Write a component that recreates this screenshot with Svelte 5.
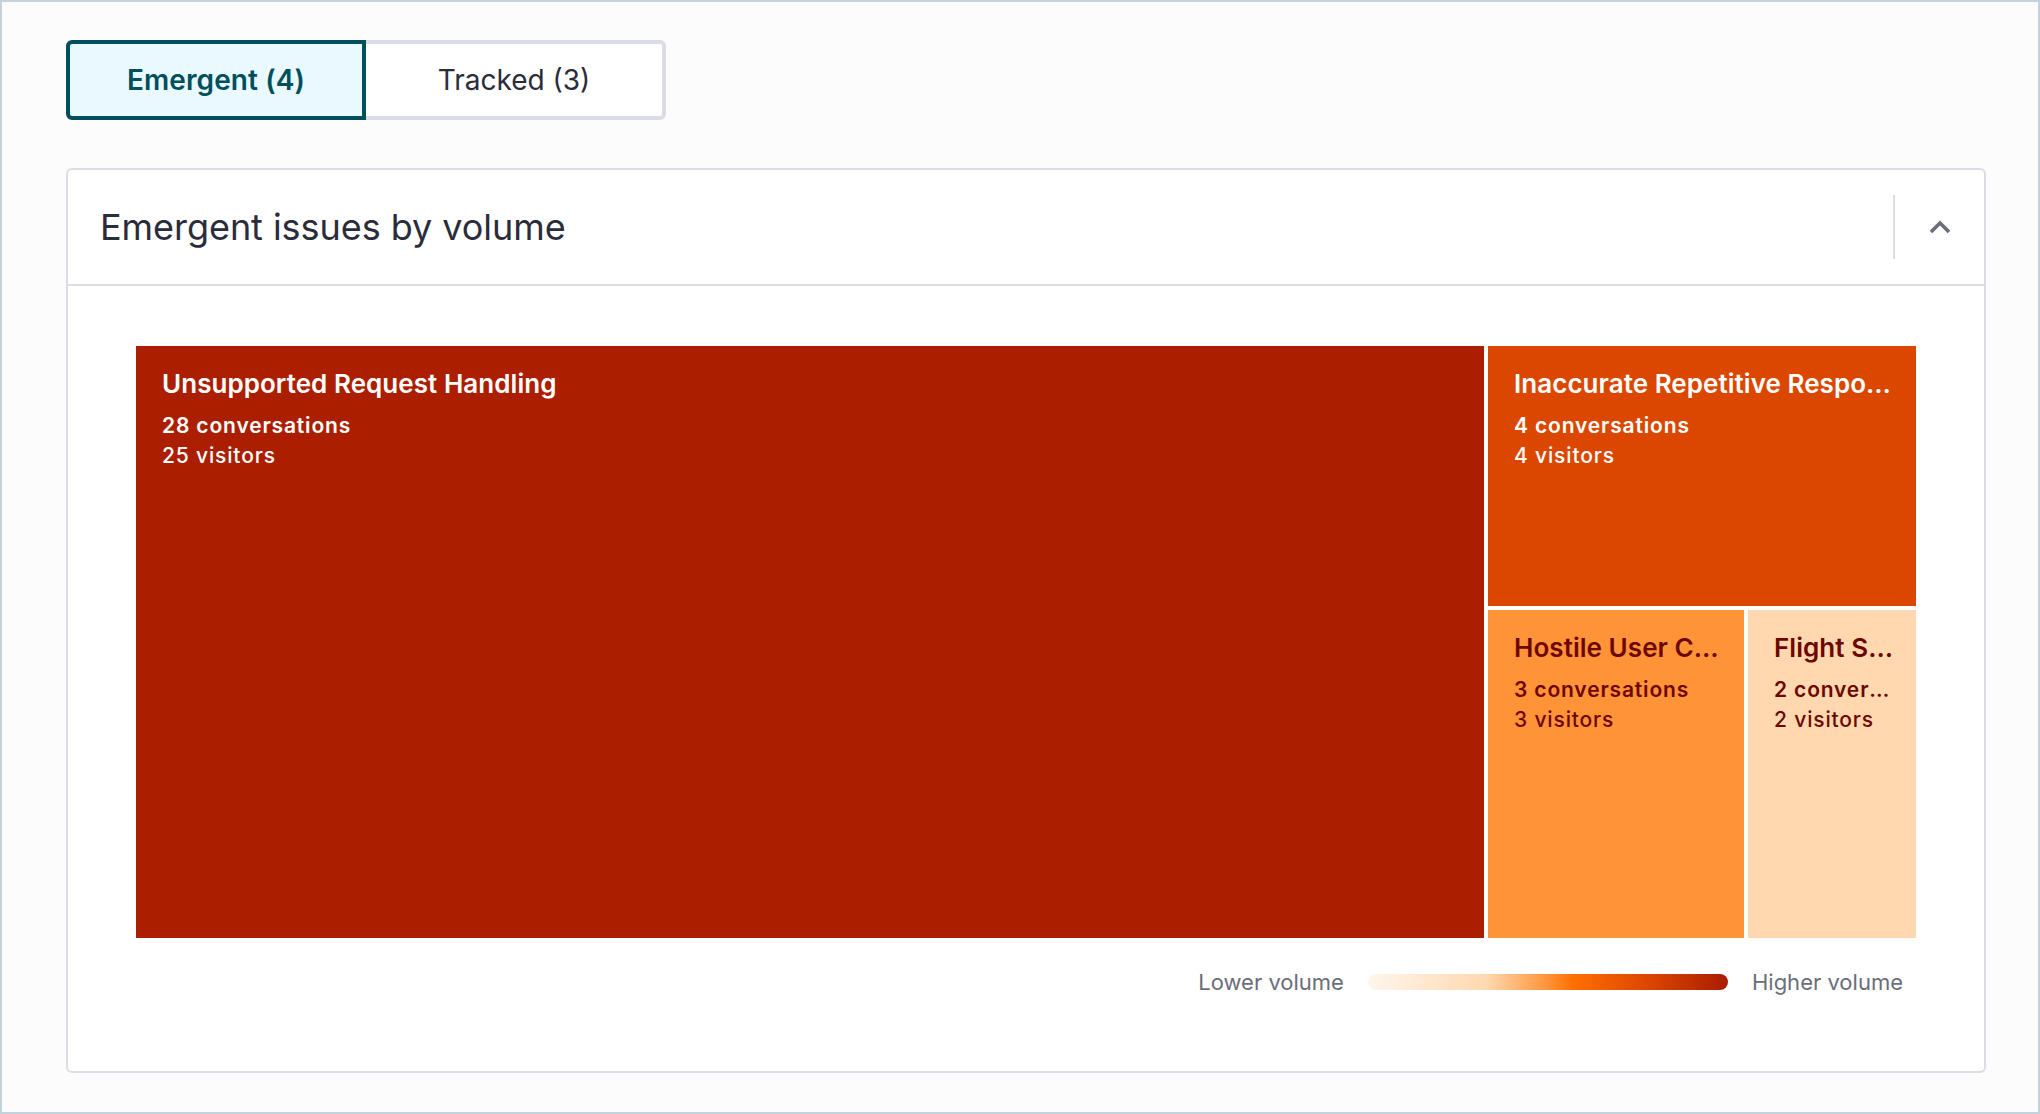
<script>
	const legend = { low: 'Lower volume', high: 'Higher volume' }
	let active = 'emergent'
</script>

<div class="page">
	<div class="tabs">
		<button class="tab" class:active={active === 'emergent'} onclick={() => (active = 'emergent')}>Emergent (4)</button>
		<button class="tab" class:active={active === 'tracked'} onclick={() => (active = 'tracked')}>Tracked (3)</button>
	</div>

	<section class="card">
		<header>
			<h2>Emergent issues by volume</h2>
			<div class="toggle">
				<svg width="24" height="16" viewBox="0 0 24 16" fill="none">
					<path d="M3 13 L12 4 L21 13" stroke="#6b6d78" stroke-width="3.6" />
				</svg>
			</div>
		</header>

		<div class="body">
			<div class="treemap">
				<div class="tile big">
					<div class="name">Unsupported Request Handling</div>
					<div class="count">28 conversations</div>
					<div class="sub">25 visitors</div>
				</div>
				<div class="side">
					<div class="tile mid">
						<div class="name">Inaccurate Repetitive Responses</div>
						<div class="count">4 conversations</div>
						<div class="sub">4 visitors</div>
					</div>
					<div class="lower">
						<div class="tile warm">
							<div class="name">Hostile User Content</div>
							<div class="count">3 conversations</div>
							<div class="sub">3 visitors</div>
						</div>
						<div class="tile pale">
							<div class="name">Flight Status Issues</div>
							<div class="count">2 conversations</div>
							<div class="sub">2 visitors</div>
						</div>
					</div>
				</div>
			</div>

			<div class="legend">
				<span>{legend.low}</span>
				<div class="bar"></div>
				<span>{legend.high}</span>
			</div>
		</div>
	</section>
</div>

<style>
	:global(body) {
		font-family: Inter, "Liberation Sans", sans-serif;
	}

	.page {
		box-sizing: border-box;
		height: 1114px;
		padding: 38px 52px 0 64px;
		background: #fcfcfd;
		border: 2px solid #c3d3de;
	}

	.tabs {
		display: flex;
		width: 600px;
		height: 80px;
	}

	.tab {
		box-sizing: border-box;
		height: 80px;
		padding: 0;
		font: 400 28px/1 Inter, sans-serif;
		color: #2b2c3a;
		background: #fff;
		border: 4px solid #dcdce6;
		border-left: 0;
		border-radius: 0 6px 6px 0;
		flex: 0 0 300px;
	}

	.tab.active {
		font-weight: 600;
		letter-spacing: 0.1px;
		color: #004f5d;
		background: #e9f9ff;
		border: 4px solid #004f5d;
		border-radius: 6px 0 0 6px;
	}

	.card {
		box-sizing: border-box;
		width: 1920px;
		height: 905px;
		margin-top: 48px;
		background: #fff;
		border: 2px solid #dcdce6;
		border-radius: 6px;
	}

	header {
		display: flex;
		align-items: center;
		justify-content: space-between;
		box-sizing: border-box;
		height: 116px;
		padding-left: 32px;
		border-bottom: 2px solid #dcdce6;
	}

	h2 {
		margin: 0 0 1px;
		font-size: 36px;
		font-weight: 400;
		letter-spacing: -0.05px;
		color: #2b2c3a;
	}

	.toggle {
		display: flex;
		align-items: center;
		justify-content: center;
		box-sizing: border-box;
		width: 91px;
		height: 64px;
		border-left: 2px solid #dcdce6;
	}

	.body {
		padding: 60px 68px 0;
	}

	.treemap {
		display: flex;
		gap: 4px;
		height: 592px;
	}

	.side {
		display: flex;
		flex-direction: column;
		gap: 4px;
		flex: 0 0 428px;
		min-width: 0;
	}

	.lower {
		display: flex;
		gap: 4px;
		flex: 0 0 328px;
		min-width: 0;
	}

	.tile {
		box-sizing: border-box;
		min-width: 0;
		padding: 20px 22px 20px 26px;
		color: #fff;
	}

	.big {
		flex: 0 0 1348px;
		background: #ab1f00;
	}

	.mid {
		flex: 0 0 260px;
		background: #dc4700;
	}

	.warm {
		flex: 0 0 256px;
		color: #6e0600;
		background: #ff9338;
	}

	.pale {
		flex: 0 0 168px;
		color: #6e0600;
		background: #ffd8b0;
	}

	.name,
	.count,
	.sub {
		overflow: hidden;
		white-space: nowrap;
		text-overflow: ellipsis;
	}

	.name {
		font-size: 26px;
		font-weight: 600;
		line-height: 36px;
		letter-spacing: 0.05px;
	}

	.count,
	.sub {
		font-size: 21px;
		line-height: 30px;
		letter-spacing: 0.84px;
	}

	.count {
		margin-top: 9px;
		font-weight: 600;
	}

	.sub {
		font-weight: 500;
	}

	.legend {
		display: flex;
		align-items: center;
		justify-content: flex-end;
		gap: 24px;
		margin-top: 29px;
		padding-right: 13px;
		font-size: 22px;
		line-height: 30px;
		color: #6b6d78;
	}

	.bar {
		width: 360px;
		height: 16px;
		border-radius: 8px;
		background: linear-gradient(90deg, #fff6ec 0%, #ffd8b0 33%, #ff9338 50%, #ff6f00 57%, #dc4600 78%, #a81c00 100%);
	}
</style>
